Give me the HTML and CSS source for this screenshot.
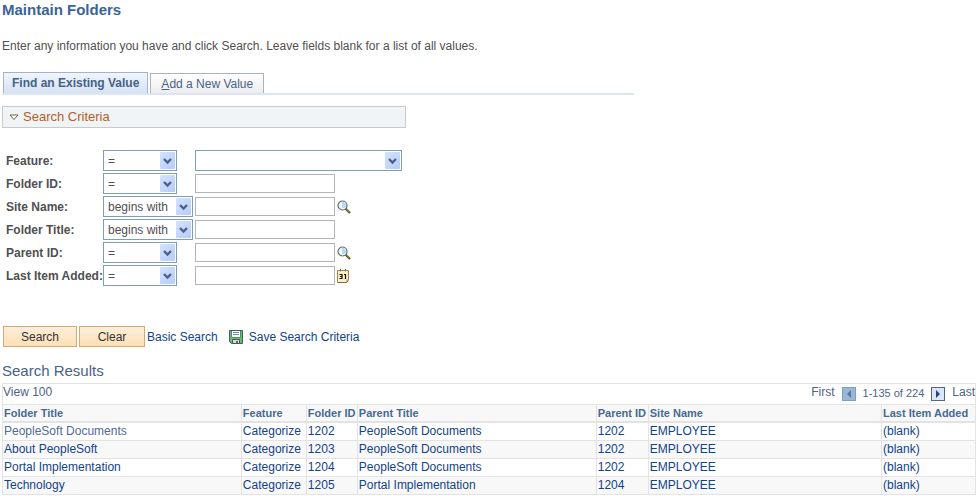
FILE: index.html
```html
<!DOCTYPE html>
<html lang="en">
<head>
    <meta charset="UTF-8">
    <meta name="viewport" content="width=device-width, initial-scale=1.0">
    <title>Maintain Folders</title>
    <link rel="stylesheet" href="styles.css">
</head>
<body>
    <svg class="sprite" aria-hidden="true">
        <symbol id="chevron" viewBox="0 0 15 17">
            <path d="M4 7l3.500 3.500L11 7" fill="none" stroke="#4d6185" stroke-width="2.400"/>
        </symbol>
        <symbol id="lens" viewBox="0 0 14 14">
            <path d="M8.500 8.500l4.500 4.500" stroke="#4f4a20" stroke-width="2.200"/>
            <path d="M9.500 9l3.500 3.500" stroke="#b0a440" stroke-width="1"/>
            <circle cx="5.500" cy="5.500" r="4.500" fill="#eef6fd" stroke="#6a6a6a" stroke-width="1.200"/>
            <path d="M5 2h2l2 3v2L7 8H5z" fill="#b4dafa"/>
            <path d="M3 4h2v3H3z" fill="#fff"/>
        </symbol>
    </svg>

    <h1>Maintain Folders</h1>
    <p class="intro">Enter any information you have and click Search. Leave fields blank for a list of all values.</p>

    <nav class="tabs">
        <a class="tab active" href="#find">Find an Existing Value</a>
        <a class="tab" href="#add"><u>A</u>dd a New Value</a>
    </nav>

    <form id="find">
        <h2 class="criteria-title">
            <svg width="10" height="7" viewBox="0 0 10 7"><path d="M1 1h8L5 5.500z" fill="#fff" stroke="#6b6b45"/></svg>
            <a href="#find">Search Criteria</a>
        </h2>

        <div class="fields">
            <label for="feature">Feature:</label>
            <span class="select op"><select aria-label="Feature operator"><option>=</option></select><svg><use href="#chevron"/></svg></span>
            <span class="select wide"><select id="feature"><option></option></select><svg><use href="#chevron"/></svg></span>

            <label for="folder-id">Folder ID:</label>
            <span class="select op"><select aria-label="Folder ID operator"><option>=</option></select><svg><use href="#chevron"/></svg></span>
            <span class="value"><input type="text" id="folder-id"></span>

            <label for="site-name">Site Name:</label>
            <span class="select text-op"><select aria-label="Site Name operator"><option>begins with</option></select><svg><use href="#chevron"/></svg></span>
            <span class="value">
                <input type="text" id="site-name">
                <button type="button" class="icon-btn" aria-label="Look up Site Name"><svg width="14" height="14"><use href="#lens"/></svg></button>
            </span>

            <label for="folder-title">Folder Title:</label>
            <span class="select text-op"><select aria-label="Folder Title operator"><option>begins with</option></select><svg><use href="#chevron"/></svg></span>
            <span class="value"><input type="text" id="folder-title"></span>

            <label for="parent-id">Parent ID:</label>
            <span class="select op"><select aria-label="Parent ID operator"><option>=</option></select><svg><use href="#chevron"/></svg></span>
            <span class="value">
                <input type="text" id="parent-id">
                <button type="button" class="icon-btn" aria-label="Look up Parent ID"><svg width="14" height="14"><use href="#lens"/></svg></button>
            </span>

            <label for="last-item">Last Item Added:</label>
            <span class="select op"><select aria-label="Last Item Added operator"><option>=</option></select><svg><use href="#chevron"/></svg></span>
            <span class="value">
                <input type="text" id="last-item">
                <button type="button" class="icon-btn" aria-label="Choose a date">
                    <svg width="13" height="14" viewBox="0 0 13 14">
                        <path d="M.5 1.500h11v9l-2 3h-9z" fill="#fbeec0" stroke="#a08450"/>
                        <path d="M1 13.500h8.500l2-3" fill="none" stroke="#85693a"/>
                        <path d="M9 13v-2.500h2.500z" fill="#d9b877"/>
                        <path d="M3.500 0v2.500M8.500 0v2.500" stroke="#777"/>
                        <path d="M2.500 5.500H5v4H2.500M3 7.500h2M7 5.500h1.500V10" fill="none" stroke="#111" stroke-width="1.200"/>
                    </svg>
                </button>
            </span>
        </div>

        <div class="actions">
            <button type="submit" class="btn btn-search">Search</button>
            <button type="reset" class="btn btn-clear">Clear</button>
            <a href="#basic">Basic Search</a>
            <a class="save" href="#save">
                <svg width="14" height="14" viewBox="0 0 14 14">
                    <path d="M.5.5h13v13h-11l-2-2z" fill="#5cc468" stroke="#4f5560"/>
                    <path d="M2.500 0h9v7.500h-9z" fill="#4f5560"/>
                    <path d="M3 1h8v6H3z" fill="#fff"/>
                    <path d="M4 2.500h6M4 4.500h6" stroke="#6f7fc0"/>
                    <path d="M3.500 9.500h7v4h-7z" fill="#d8d8dc" stroke="#4f5560"/>
                    <path d="M7 11h2v2H7z" fill="#666"/>
                </svg>
                Save Search Criteria
            </a>
        </div>
    </form>

    <h2 class="results-title">Search Results</h2>
    <div class="results">
        <div class="results-bar">
            <a href="#all">View 100</a>
            <div class="pager">
                <span>First</span>
                <button type="button" class="page-btn" disabled aria-label="Previous page"><svg width="12" height="12" viewBox="0 0 12 12"><path d="M8 2v8L4 6z" fill="#54789f"/></svg></button>
                <span class="range">1-135 of 224</span>
                <button type="button" class="page-btn" aria-label="Next page"><svg width="12" height="12" viewBox="0 0 12 12"><path d="M4 2v8l4-4z" fill="#25447c"/></svg></button>
                <a href="#last">Last</a>
            </div>
        </div>
        <table>
            <colgroup>
                <col>
                <col class="col-feature">
                <col class="col-folder-id">
                <col>
                <col class="col-parent-id">
                <col class="col-site">
                <col class="col-last">
            </colgroup>
            <thead>
                <tr>
                    <th>Folder Title</th>
                    <th>Feature</th>
                    <th>Folder ID</th>
                    <th>Parent Title</th>
                    <th>Parent ID</th>
                    <th>Site Name</th>
                    <th>Last Item Added</th>
                </tr>
            </thead>
            <tbody>
                <tr>
                    <td><a class="current" href="#1202">PeopleSoft Documents</a></td>
                    <td><a href="#1202">Categorize</a></td>
                    <td><a href="#1202">1202</a></td>
                    <td><a href="#1202">PeopleSoft Documents</a></td>
                    <td><a href="#1202">1202</a></td>
                    <td><a href="#1202">EMPLOYEE</a></td>
                    <td><a href="#1202">(blank)</a></td>
                </tr>
                <tr>
                    <td><a href="#1203">About PeopleSoft</a></td>
                    <td><a href="#1203">Categorize</a></td>
                    <td><a href="#1203">1203</a></td>
                    <td><a href="#1203">PeopleSoft Documents</a></td>
                    <td><a href="#1203">1202</a></td>
                    <td><a href="#1203">EMPLOYEE</a></td>
                    <td><a href="#1203">(blank)</a></td>
                </tr>
                <tr>
                    <td><a href="#1204">Portal Implementation</a></td>
                    <td><a href="#1204">Categorize</a></td>
                    <td><a href="#1204">1204</a></td>
                    <td><a href="#1204">PeopleSoft Documents</a></td>
                    <td><a href="#1204">1202</a></td>
                    <td><a href="#1204">EMPLOYEE</a></td>
                    <td><a href="#1204">(blank)</a></td>
                </tr>
                <tr>
                    <td><a href="#1205">Technology</a></td>
                    <td><a href="#1205">Categorize</a></td>
                    <td><a href="#1205">1205</a></td>
                    <td><a href="#1205">Portal Implementation</a></td>
                    <td><a href="#1205">1204</a></td>
                    <td><a href="#1205">EMPLOYEE</a></td>
                    <td><a href="#1205">(blank)</a></td>
                </tr>
            </tbody>
        </table>
    </div>
</body>
</html>
```

FILE: styles.css
```css
* {
    box-sizing: border-box;
}

body {
    margin: 0;
    padding: 0 3px 0 2px;
    font-family: "Liberation Sans", Arial, sans-serif;
    font-size: 12px;
    line-height: 16px;
    color: #505050;
    background-color: #fff;
}

a {
    color: #12428c;
    text-decoration: none;
}

a:hover {
    text-decoration: underline;
}

.sprite {
    display: none;
}

h1 {
    margin: 0 0 18px;
    font-size: 15px;
    line-height: 20px;
    color: #3c6396;
}

.intro {
    margin: 0 0 18px;
}

/* tabs */
.tabs {
    display: flex;
    align-items: flex-end;
    gap: 2px;
    width: 65%;
    max-width: 632px;
    padding-left: 1px;
    border-bottom: 2px solid #dae5f5;
}

.tab {
    height: 20px;
    padding: 0 10px;
    line-height: 20px;
    color: #4a6288;
    background: linear-gradient(#fff, #ededef);
    border: 1px solid #a7b2c8;
    border-bottom: none;
}

.tab.active {
    height: 21px;
    padding: 0 8px;
    font-weight: bold;
    color: #466286;
    background: linear-gradient(#f0f5fd, #d6e2f3);
}

/* search form */
.criteria-title {
    display: flex;
    align-items: center;
    gap: 4px;
    max-width: 404px;
    height: 22px;
    margin: 11px 0 22px;
    padding: 0 6px;
    font-size: 13px;
    font-weight: normal;
    background-color: #f0f4f5;
    border: 1px solid #c5c9cd;
}

.criteria-title a {
    color: #b0602a;
}

.fields {
    display: grid;
    grid-template-columns: 95px 90px auto;
    grid-auto-rows: 21px;
    gap: 2px;
    align-items: center;
    justify-content: start;
    padding-left: 4px;
}

.fields label {
    font-weight: bold;
    white-space: nowrap;
}

.select {
    position: relative;
    display: block;
    height: 21px;
}

.op {
    width: 74px;
}

.text-op {
    width: 90px;
}

.wide {
    width: 207px;
}

.select select {
    appearance: none;
    display: block;
    width: 100%;
    height: 21px;
    padding: 0 16px 0 4px;
    font: inherit;
    color: #505050;
    background-color: #fff;
    border: 1px solid #7f9db9;
    border-radius: 0;
}

.select svg {
    position: absolute;
    top: 2px;
    right: 2px;
    width: 15px;
    height: 17px;
    background: linear-gradient(135deg, #d5e2ff, #b4ccfa);
    border-radius: 1px;
    pointer-events: none;
}

.value {
    display: flex;
    align-items: center;
    gap: 2px;
}

.value input {
    width: 140px;
    height: 19px;
    padding: 0 3px;
    font: inherit;
    border: 1px solid #b4b4b4;
}

.icon-btn {
    display: flex;
    padding: 0;
    background: none;
    border: none;
    cursor: pointer;
}

.actions {
    display: flex;
    align-items: center;
    gap: 2px;
    margin-top: 40px;
    padding-left: 1px;
}

.btn {
    height: 21px;
    padding: 0;
    font: inherit;
    color: #333;
    background: linear-gradient(#feefd8, #fbe0b5);
    border: 1px solid #d9a774;
    cursor: pointer;
}

.btn-search {
    width: 74px;
}

.btn-clear {
    width: 66px;
}

.save {
    display: flex;
    align-items: center;
    gap: 6px;
    margin-left: 9px;
}

/* results */
.results-title {
    margin: 14px 0 2px;
    font-size: 15px;
    font-weight: normal;
    line-height: 20px;
    color: #466286;
}

.results {
    border: 1px solid #e3e3e3;
    border-bottom: none;
}

.results-bar {
    display: flex;
    justify-content: space-between;
    height: 20px;
}

.results-bar a,
.pager {
    color: #4f6285;
}

.pager {
    display: flex;
    gap: 7px;
}

.range {
    font-size: 11px;
    line-height: 18px;
}

.page-btn {
    display: flex;
    width: 14px;
    height: 14px;
    margin-top: 3px;
    padding: 0;
    background-color: #dbe6fb;
    border: 1px solid #58627c;
    cursor: pointer;
}

.page-btn:disabled {
    background-color: #9ab8d3;
    border-color: #7f9fbf;
}

table {
    width: 100%;
    table-layout: fixed;
    border-spacing: 0;
}

.col-feature {
    width: 65px;
}

.col-folder-id {
    width: 51px;
}

.col-parent-id {
    width: 52px;
}

.col-site {
    width: 24%;
}

.col-last {
    width: 93px;
}

th,
td {
    padding: 0 0 0 1px;
    text-align: left;
    line-height: 17px;
    white-space: nowrap;
    border-right: 1px solid #e3e3e3;
    border-bottom: 1px solid #e3e3e3;
}

th:last-child,
td:last-child {
    border-right: none;
}

th {
    font-size: 11px;
    line-height: 16px;
    color: #466a94;
    background-color: #f8f8f8;
    border-top: 1px solid #e3e3e3;
    border-bottom-width: 2px;
}

tbody tr:nth-child(even) {
    background-color: #f8f8f8;
}

.current {
    color: #4f6a9a;
}
```
